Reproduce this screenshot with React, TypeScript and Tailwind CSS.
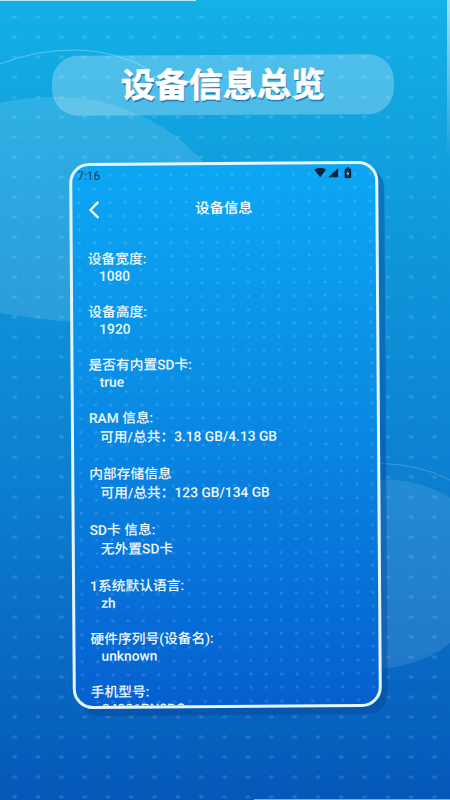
const F = "font-['Roboto','Noto_Sans_CJK_SC',sans-serif]";
const rows: [string, string, boolean][] = [
  ["设备宽度:", "1080", false],
  ["设备高度:", "1920", false],
  ["是否有内置SD卡:", "true", false],
  ["RAM 信息:", "可用/总共：3.18 GB/4.13 GB", true],
  ["内部存储信息", "可用/总共：123 GB/134 GB", true],
  ["SD卡 信息:", "无外置SD卡", true],
  ["1系统默认语言:", "zh", false],
  ["硬件序列号(设备名):", "unknown", false],
  ["手机型号:", "24031PN0DC", false],
];
export default function App() {
  return (
    <div className={`relative w-[450px] h-[800px] overflow-hidden bg-[linear-gradient(180deg,#14b0e6_0%,#0f9bdc_25%,#0c7fd0_60%,#0558b8_100%)] ${F}`}>
      <svg width="450" height="800" viewBox="0 0 450 800" className="absolute inset-0">
        <path d="M0 103 Q45 93 95 100 Q170 118 210 170 L210 316 Q120 326 60 321 Q30 318 0 313Z" fill="white" fillOpacity="0.12" />
        <path d="M0 64 Q35 50 75 50 Q115 50 150 70" fill="none" stroke="white" strokeOpacity="0.3" strokeWidth="1" />
        <path d="M370 479 Q420 478 450 498 V643 Q425 665 370 671Z" fill="white" fillOpacity="0.1" />
        <path d="M375 463 Q420 464 450 480" fill="none" stroke="white" strokeOpacity="0.2" strokeWidth="1" />
      </svg>
      <div className="absolute inset-0 bg-[radial-gradient(ellipse_3.2px_2.4px,rgba(255,255,255,0.13)_45%,transparent_100%)] bg-[length:23.33px_20px] bg-[position:3px_7px]" />
      <div className="relative flex flex-col items-center pt-[55px] pr-[4px]">
        <div className="flex items-center justify-center w-[342px] h-[60px] rounded-[26px] bg-white/25 -rotate-[0.3deg]">
          <span className="text-[34px] font-bold text-white leading-none [-webkit-text-stroke:0.6px_white] [text-shadow:1px_2px_0_#2a78ad]">设备信息总览</span>
        </div>
        <div className="mt-[47px] ml-[4px] w-[309px] h-[546px] rounded-[20px] border-[3px] border-[#e4f5fd] bg-[linear-gradient(180deg,#0ca7f4_0%,#0a8ee6_40%,#0560cf_100%)] shadow-[6px_7px_0_rgba(4,70,150,0.45)] -rotate-[0.4deg] relative">
          <div className="absolute inset-0 rounded-[17px] overflow-hidden">
            <div className="absolute inset-0 bg-[radial-gradient(ellipse_2.2px_2px,rgba(255,255,255,0.14)_45%,transparent_100%)] bg-[length:15.33px_13.5px] bg-[position:-1px_3px]" />
            <div className="relative flex justify-between pl-[5px] pr-[23px] pt-[1px] h-[21px] items-start">
              <span className="text-[12px] text-[#0f3f68] leading-[18px]">7:16</span>
              <svg width="38" height="12" viewBox="0 0 38 12" className="mt-[2px]">
                <path d="M0 2.5 Q6 -1.5 12 2.5 L6 10Z" fill="#0b2540" />
                <path d="M14 10 L24 1 V10Z" fill="#0b2540" />
                <rect x="30.5" y="1.5" width="6.5" height="9.5" rx="1" fill="#0b2540" />
                <rect x="32.5" y="0" width="2.5" height="2" fill="#0b2540" />
                <path d="M34.2 3 L32.3 6.8 H33.5 L33.2 9.6 L35.2 5.8 H33.9Z" fill="#8fd6f5" />
              </svg>
            </div>
            <div className="relative flex items-center h-[32px] mt-[7px]">
              <svg width="14" height="20" viewBox="0 0 14 20" className="ml-[15px]">
                <path d="M11 2 L3 10 L11 18" fill="none" stroke="white" strokeWidth="2.2" />
              </svg>
              <span className="absolute left-0 right-0 text-center text-[14.3px] font-medium text-white">设备信息</span>
            </div>
            <div className="relative pl-[15px] pt-[22.5px] flex flex-col gap-[17px]">
              {rows.map(([a, b, tall]) => (
                <div key={a} className="text-[13.75px] font-medium text-[#eef8fe]">
                  <div className="h-[20px] leading-[20px]">{a}</div>
                  <div className={tall ? "pl-[11px] h-[19px] leading-[19px] whitespace-pre" : "pl-[11px] h-[16px] leading-[15px] whitespace-pre"}>{b}</div>
                </div>
              ))}
            </div>
          </div>
        </div>
      </div>
      <div className="absolute left-0 top-0 w-[196px] h-[1px] bg-white/70" />
      <div className="absolute right-0 bottom-0 w-[196px] h-[1px] bg-white/50" />
      <div className="absolute right-0 top-0 h-[160px] w-[3px] bg-[linear-gradient(180deg,rgba(255,255,255,0.6),transparent)]" />
    </div>
  );
}
